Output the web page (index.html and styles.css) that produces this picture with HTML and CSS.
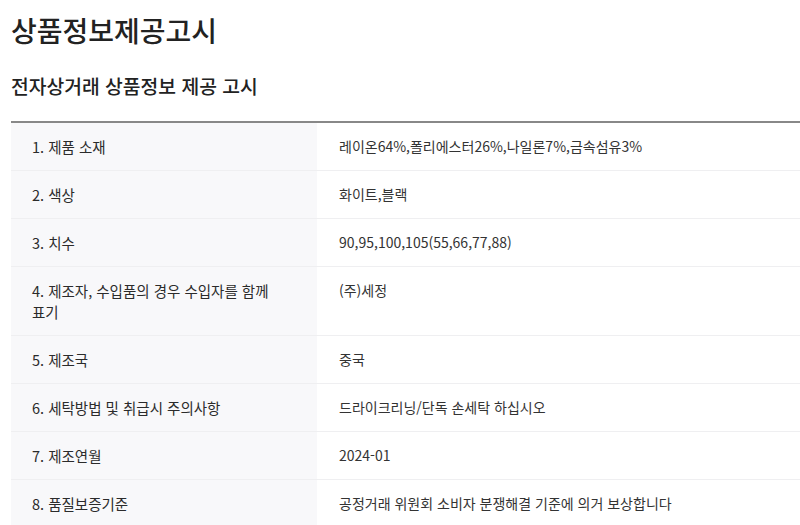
FILE: index.html
```html
<!DOCTYPE html>
<html lang="ko">
<head>
<meta charset="utf-8">
<title>상품정보제공고시</title>
<link rel="stylesheet" href="styles.css">
</head>
<body>
<div class="page">
  <h1 class="title">상품정보제공고시</h1>
  <h2 class="subtitle">전자상거래 상품정보 제공 고시</h2>
  <table class="info">
    <tbody>
      <tr><th>1. 제품 소재</th><td>레이온64%,폴리에스터26%,나일론7%,금속섬유3%</td></tr>
      <tr><th>2. 색상</th><td>화이트,블랙</td></tr>
      <tr><th>3. 치수</th><td>90,95,100,105(55,66,77,88)</td></tr>
      <tr><th>4. 제조자, 수입품의 경우 수입자를 함께 표기</th><td>(주)세정</td></tr>
      <tr><th>5. 제조국</th><td>중국</td></tr>
      <tr><th>6. 세탁방법 및 취급시 주의사항</th><td>드라이크리닝/단독 손세탁 하십시오</td></tr>
      <tr><th>7. 제조연월</th><td>2024-01</td></tr>
      <tr><th>8. 품질보증기준</th><td>공정거래 위원회 소비자 분쟁해결 기준에 의거 보상합니다</td></tr>
    </tbody>
  </table>
</div>
</body>
</html>
```
FILE: styles.css
```css
html, body {
  margin: 0;
  padding: 0;
  background: #fff;
}
body {
  font-family: "Noto Sans CJK KR", "Noto Sans", sans-serif;
  color: #333;
}
.page {
  padding: 12px 0 0 11px;
}
.title {
  margin: 0;
  font-size: 28px;
  line-height: 36px;
  font-weight: 500;
  color: #222;
}
.subtitle {
  margin: 25px 0 0;
  font-size: 19.3px;
  line-height: 26px;
  font-weight: 500;
  color: #222;
}
.info {
  margin-top: 22px;
  width: 789px;
  border-collapse: collapse;
  border-top: 2px solid #888;
  font-size: 14px;
  line-height: 21px;
}
.info th,
.info td {
  text-align: left;
  vertical-align: top;
  padding: 13px 21px 13px 22px;
  border-bottom: 1px solid #efeff1;
  word-break: keep-all;
}
.info th {
  width: 306px;
  box-sizing: border-box;
  padding-left: 21px;
  padding-right: 20px;
  background: #f8f8fa;
  font-size: 14.5px;
  font-weight: 400;
  color: #2b2b2b;
}
.info td {
  color: #333;
}
```
